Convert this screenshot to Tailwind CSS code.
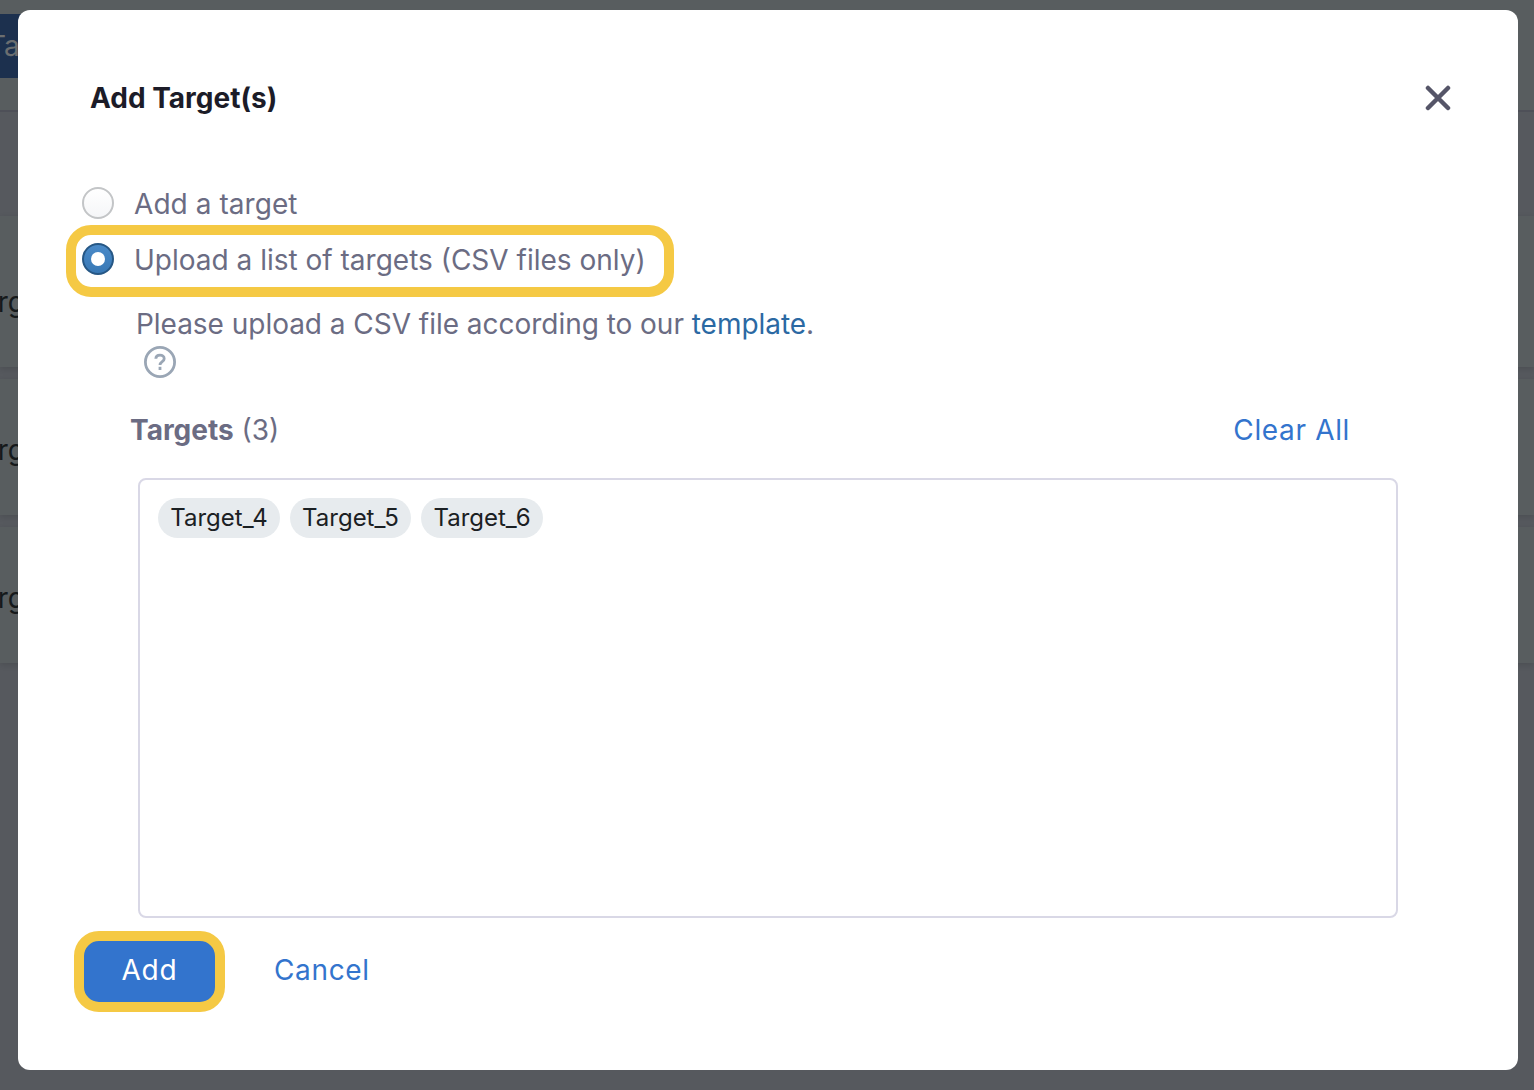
<!DOCTYPE html>
<html lang="en">
<head>
<meta charset="utf-8">
<title>Add Target(s)</title>
<script src="https://cdn.jsdelivr.net/npm/@tailwindcss/browser@4"></script>
</head>
<body class="relative h-[1090px] w-[1534px] overflow-hidden bg-[#56595e] font-['Inter',sans-serif] text-[28px] leading-10">
  <!-- Dimmed page behind the dialog -->
  <div class="flex flex-col text-[#15191b]" aria-hidden="true">
    <div class="flex h-28 border-b-2 border-[#4e5058] bg-[#585d5f] pt-3.5">
      <div class="flex h-16 w-28 items-center bg-[#1c304e] text-[#6b6e70]"><span class="-ml-[12px]">Target</span></div>
    </div>
    <div class="mt-[104px] flex h-[151px] items-center bg-[#585d5f] pt-5 shadow-[0_2px_6px_rgba(0,0,0,0.12)]"><span class="-ml-[34px]">Target_1</span></div>
    <div class="mt-3 flex h-[136px] items-center bg-[#585d5f] shadow-[0_2px_6px_rgba(0,0,0,0.12)]"><span class="-ml-[34px] pt-1.5">Target_2</span></div>
    <div class="mt-3 flex h-[136px] items-center bg-[#585d5f] shadow-[0_2px_6px_rgba(0,0,0,0.12)]"><span class="-ml-[34px] pt-1.5">Target_3</span></div>
  </div>

  <!-- Dialog -->
  <div role="dialog" class="absolute top-2.5 left-[18px] flex h-[1060px] w-[1500px] flex-col rounded-xl bg-white text-[#6b6c83]">
    <header class="flex items-center justify-between pt-[68px] pr-[67px] pl-[72px]">
      <h1 class="text-[28px] leading-10 font-bold text-[#1c1c28]">Add Target(s)</h1>
      <svg class="size-[26px]" viewBox="0 0 26 26" fill="none" stroke="#555568" stroke-width="4.5" stroke-linecap="round"><path d="M3 3L23 23M23 3L3 23"/></svg>
    </header>

    <div class="mt-[65px] flex h-10 items-center pl-16">
      <span class="size-8 shrink-0 rounded-full border-2 border-[#c3c5c7] bg-linear-to-b from-white to-[#f5f6f8]"></span>
      <span class="ml-5 pt-0.5 tracking-[0.06px]">Add a target</span>
    </div>
    <div class="mt-0.5 ml-12 flex h-[72px] w-[608px] items-center rounded-[25px] border-10 border-[#f5c944] pl-1.5">
      <span class="mb-1 flex size-8 shrink-0 items-center justify-center rounded-full border-2 border-[#265785] bg-linear-to-b from-[#4a8ac8] to-[#3878b5]"><span class="size-3.5 rounded-full bg-white"></span></span>
      <span class="mb-0.5 ml-5 whitespace-nowrap">Upload a list of targets (CSV files only)</span>
    </div>

    <p class="mt-[7px] ml-[118px] tracking-[-0.03px]">Please upload a CSV file according to our <a class="text-[#2b69a3]">template</a>.</p>
    <svg class="mt-[2px] ml-[126px] size-8" viewBox="0 0 32 32" fill="none" stroke="#9aa6b5" stroke-width="2.8"><circle cx="16" cy="16" r="14.6"/><path d="M11.8 12.8C11.9 10.6 13.7 9.2 16 9.2C18.4 9.2 20.2 10.6 20.2 12.7C20.2 15.7 16 15.5 16 19"/><path d="M16 20.8V24"/></svg>

    <div class="mt-8 flex items-center justify-between pr-[168px] pl-[112px]">
      <h2><b class="font-bold">Targets</b> (3)</h2>
      <a class="tracking-[0.65px] text-[#3374cd]">Clear All</a>
    </div>
    <div class="mt-7 ml-[120px] flex h-[440px] w-[1260px] items-start gap-2.5 rounded-lg border-2 border-[#d9d8e6] p-[18px] text-2xl leading-10 text-[#1b2023]">
      <span class="flex h-10 w-[122px] items-center justify-center rounded-full bg-[#e7ebee]">Target_4</span>
      <span class="flex h-10 w-[121px] items-center justify-center rounded-full bg-[#e7ebee]">Target_5</span>
      <span class="flex h-10 w-[122px] items-center justify-center rounded-full bg-[#e7ebee]">Target_6</span>
    </div>

    <footer class="mt-[13px] ml-14 flex items-center">
      <button class="h-[81px] w-[151px] rounded-[25px] border-10 border-[#f5c944] bg-[#3374cd] pb-1 tracking-[0.8px] text-white">Add</button>
      <a class="ml-[49px] pb-1 tracking-[0.65px] text-[#3374cd]">Cancel</a>
    </footer>
  </div>
</body>
</html>
